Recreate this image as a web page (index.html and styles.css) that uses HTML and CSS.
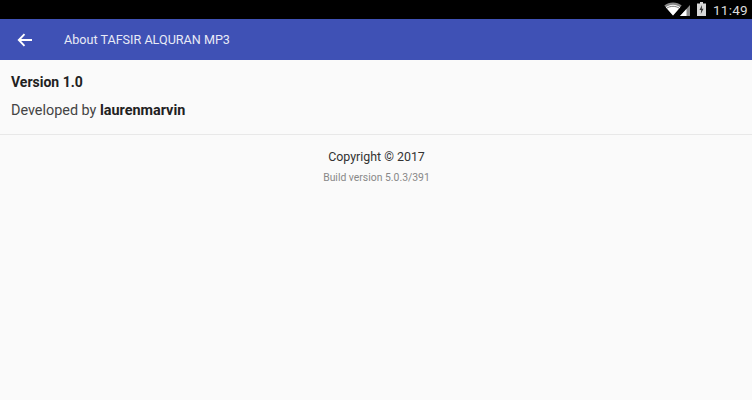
FILE: index.html
```html
<!DOCTYPE html>
<html lang="en">
<head>
    <meta charset="UTF-8">
    <title>About TAFSIR ALQURAN MP3</title>
    <link rel="stylesheet" href="styles.css">
</head>
<body>
    <!-- status bar -->
    <div class="status-bar">
        <svg class="icon-wifi" width="18" height="14" viewBox="0 0 18 14">
            <path d="M9 13.500 .3 3.600C2.700 1.500 5.700.5 9 .5s6.300 1 8.700 3.100z" fill="#8a8a8a"/>
            <path d="M9 13.500 1.800 5.300C3.800 3.700 6.300 2.800 9 2.800s5.200.9 7.200 2.500z" fill="#fff"/>
            <path d="M2.800 6.200C4.500 5 6.700 4.300 9 4.300s4.500.7 6.200 1.900" fill="none" stroke="#444" stroke-width=".7"/>
        </svg>
        <svg class="icon-signal" width="11" height="14" viewBox="0 0 11 14">
            <path d="M0 14 10 3v11z" fill="#8a8a8a"/>
            <path d="M0 14 6.500 6.900V14z" fill="#fff"/>
        </svg>
        <svg class="icon-battery" width="9" height="14" viewBox="0 0 9 14">
            <path d="M3 0h3v1.500h3V14H0V1.500h3z" fill="#d8d8d8"/>
            <path d="M5 3 2.500 8H4.200L3.800 12 6.500 6.800H4.800z" fill="#333"/>
        </svg>
        <span class="clock">11:49</span>
    </div>

    <!-- toolbar -->
    <div class="toolbar">
        <svg class="back" width="16" height="14" viewBox="0 0 16 14">
            <path d="M15 7H2M7.500 1.200 1.800 7l5.700 5.800" fill="none" stroke="#fff" stroke-width="1.900"/>
        </svg>
        <span class="toolbar-title">About TAFSIR ALQURAN MP3</span>
    </div>

    <div class="info">
        <p class="version">Version 1.0</p>
        <p class="developer">Developed by <b>laurenmarvin</b></p>
    </div>

    <div class="credits">
        <p class="copyright">Copyright © 2017</p>
        <p class="build">Build version 5.0.3/391</p>
    </div>
</body>
</html>
```

FILE: styles.css
```css
html, body {
    height: 100%;
}

body {
    margin: 0;
    background: #fafafa;
    font-family: Roboto, "Liberation Sans", sans-serif;
    overflow: hidden;
}

p {
    margin: 0;
}

.status-bar {
    height: 19px;
    background: #000;
    display: flex;
    align-items: center;
    justify-content: flex-end;
    padding-right: 4px;
}

.icon-wifi {
    margin-top: -2px;
    margin-right: -2px;
}

.icon-signal {
    margin-top: -2px;
    margin-right: 6px;
}

.icon-battery {
    margin-top: -2px;
    margin-right: 7px;
}

.clock {
    color: #dcdcdc;
    font-size: 13.500px;
    letter-spacing: 0.3px;
}

.toolbar {
    height: 41px;
    background: #3f51b5;
    display: flex;
    align-items: center;
    padding-left: 17px;
}

.back {
    margin-right: 31px;
}

.toolbar-title {
    color: #e8eaf6;
    font-size: 12.600px;
}

.info {
    height: 75px;
    padding-left: 11px;
    border-bottom: 1px solid #e8e8e8;
    box-sizing: border-box;
}

.version {
    padding-top: 14px;
    font-size: 14px;
    line-height: 17px;
    font-weight: 700;
    color: #212121;
}

.developer {
    margin-top: 11px;
    font-size: 14.400px;
    line-height: 17px;
    color: #444;
}

.developer b {
    color: #212121;
}

.credits {
    text-align: center;
}

.copyright {
    margin-top: 14px;
    padding-left: 1px;
    font-size: 12.400px;
    line-height: 16px;
    color: #333;
}

.build {
    margin-top: 6px;
    padding-left: 1px;
    font-size: 10.400px;
    line-height: 14px;
    color: #888;
}
```
